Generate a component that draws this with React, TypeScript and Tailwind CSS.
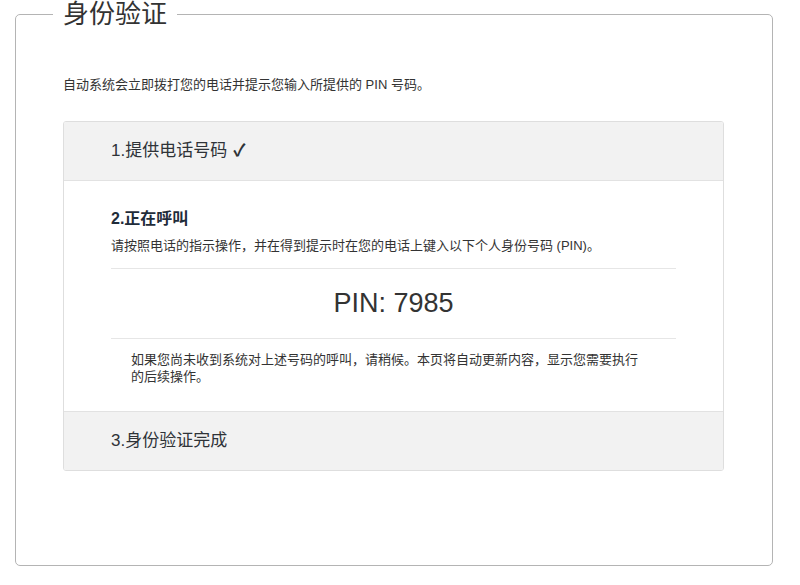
const font = '"Liberation Sans", "Noto Sans CJK SC", sans-serif';

function Step({ title, done }: { title: string; done?: boolean }) {
  return (
    <div className="flex h-[58px] items-center bg-[#f2f2f2] px-[47px] text-[17px] text-[#2f3338]">
      {title}
      {done && <span className="ml-[6px] font-bold">✓</span>}
    </div>
  );
}

export default function App() {
  return (
    <div className="min-h-[585px] bg-white pl-[15px]" style={{ fontFamily: font }}>
      <fieldset className="h-[566px] w-[758px] rounded-[5px] border border-[#b4b4b4] pl-[47px] pr-12">
        <legend className="-ml-[10px] px-[10px] text-[26px] leading-[28px] text-[#333]">
          身份验证
        </legend>

        <p className="mt-[48px] text-[13px] leading-[18px] text-[#333]">
          自动系统会立即拨打您的电话并提示您输入所提供的 PIN 号码。
        </p>

        <div className="mt-[27px] overflow-hidden rounded-[3px] border border-[#dedede]">
          <Step title="1.提供电话号码" done />

          <div className="border-y border-[#e2e2e2] bg-white px-[47px] pb-[26px] pt-[27px]">
            <h3 className="text-[16px] font-bold leading-[22px] text-[#1f2c3a]">2.正在呼叫</h3>
            <p className="mt-[7px] text-[13px] leading-[18px] text-[#333]">
              请按照电话的指示操作，并在得到提示时在您的电话上键入以下个人身份号码 (PIN)。
            </p>
            <div className="mt-[13px] border-y border-[#e6e6e6] py-[17px] text-center text-[27px] leading-[35px] text-[#333]">
              PIN: 7985
            </div>
            <p className="mt-[12px] pl-5 pr-[32px] text-[13px] leading-[17px] text-[#333]">
              如果您尚未收到系统对上述号码的呼叫，请稍候。本页将自动更新内容，显示您需要执行的后续操作。
            </p>
          </div>

          <Step title="3.身份验证完成" />
        </div>
      </fieldset>
    </div>
  );
}
